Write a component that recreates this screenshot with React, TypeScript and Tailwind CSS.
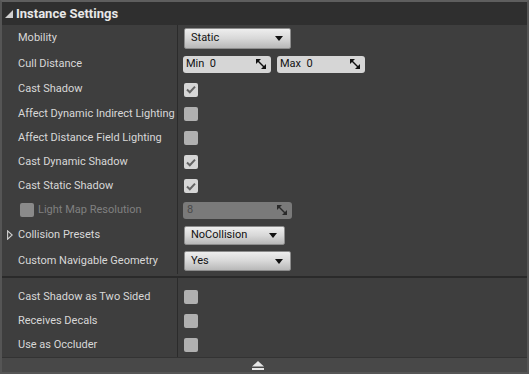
import React from "react";

const font = { fontFamily: "Roboto, 'Noto Sans', sans-serif" };

function Check({ checked, disabled }: { checked?: boolean; disabled?: boolean }) {
  return (
    <div
      className={
        "w-[14px] h-[14px] rounded-[2px] flex items-center justify-center " +
        (disabled ? "bg-[#8a8a8a]" : checked ? "bg-[#d6d6d6]" : "bg-[#b0b0b0]")
      }
    >
      {checked && (
        <svg width="10" height="9" viewBox="0 0 10 9">
          <path d="M1 4.5 L3.8 7.2 L9 1.6" stroke="#646464" strokeWidth="2" fill="none" />
        </svg>
      )}
    </div>
  );
}

function Arrow() {
  return (
    <svg width="8" height="5" viewBox="0 0 8 5">
      <path d="M0 0 H8 L4 5 Z" fill="#111" />
    </svg>
  );
}

function SpinIcon({ color = "#111" }: { color?: string }) {
  return (
    <svg width="10" height="10" viewBox="0 0 10 10">
      <path d="M0 0 H5 L0 5 Z" fill={color} />
      <path d="M10 10 H5 L10 5 Z" fill={color} />
      <path d="M2 2 L8 8" stroke={color} strokeWidth="1.4" />
    </svg>
  );
}

function Dropdown({ text, w, h }: { text: string; w: string; h: string }) {
  return (
    <div
      className={
        w +
        " " +
        h +
        " rounded-[2px] bg-gradient-to-b from-[#eeeeee] via-[#d8d8d8] to-[#b8b8b8] border border-[#8c8c8c] flex items-center justify-between pl-[6px] pr-[7px] text-[11px] text-[#111]"
      }
    >
      <span>{text}</span>
      <Arrow />
    </div>
  );
}

function Row({
  label,
  h,
  children,
  labelEl,
}: {
  label?: string;
  h: string;
  children?: React.ReactNode;
  labelEl?: React.ReactNode;
}) {
  return (
    <div className={"flex " + h}>
      <div className="w-[176px] shrink-0 flex items-center pl-[16px] border-r border-[#2b2b2b] text-[11px] text-[#d8d8d8]">
        {labelEl ?? label}
      </div>
      <div className="flex-1 flex items-center pl-[6px]">{children}</div>
    </div>
  );
}

export default function App() {
  return (
    <div
      className="w-[529px] h-[374px] bg-[#3e3e3e] border-2 border-[#555555] border-t-[#5e5e5e] flex flex-col overflow-hidden"
      style={font}
    >
      <div className="h-[23px] shrink-0 bg-[#2f2f2f] flex items-center pl-[3px]">
        <svg width="8" height="8" viewBox="0 0 8 8" className="mr-[3px] mt-[1px]">
          <path d="M8 0 V8 H0 Z" fill="#d0d0d0" />
        </svg>
        <span className="text-[13px] font-bold text-[#e8e8e8]">Instance Settings</span>
      </div>

      <div className="flex flex-col">
        <Row label="Mobility" h="h-[26px]">
          <Dropdown text="Static" w="w-[107px]" h="h-[21px]" />
        </Row>
        <Row label="Cull Distance" h="h-[26px]">
          <div className="flex gap-[6px] -ml-[1px]">
            <div className="w-[88px] h-[17px] rounded-[3px] bg-[#d6d6d6] flex items-center justify-between pl-[3px] pr-[5px] text-[11px] text-[#111]">
              <span>Min&nbsp;&nbsp;0</span>
              <SpinIcon />
            </div>
            <div className="w-[88px] h-[17px] rounded-[3px] bg-[#d6d6d6] flex items-center justify-between pl-[3px] pr-[5px] text-[11px] text-[#111]">
              <span>Max&nbsp;&nbsp;0</span>
              <SpinIcon />
            </div>
          </div>
        </Row>
        <Row label="Cast Shadow" h="h-[25px]">
          <Check checked />
        </Row>
        <Row label="Affect Dynamic Indirect Lighting" h="h-[24px]">
          <Check />
        </Row>
        <Row label="Affect Distance Field Lighting" h="h-[24px]">
          <Check />
        </Row>
        <Row label="Cast Dynamic Shadow" h="h-[24px]">
          <Check checked />
        </Row>
        <Row label="Cast Static Shadow" h="h-[24px]">
          <Check checked />
        </Row>
        <Row
          h="h-[24px]"
          labelEl={
            <div className="flex items-center ml-[2px] gap-[4px] text-[#808080]">
              <Check disabled />
              <span>Light Map Resolution</span>
            </div>
          }
        >
          <div className="-ml-[1px] w-[109px] h-[17px] rounded-[3px] bg-[#7a7a7a] flex items-center justify-between pl-[4px] pr-[5px] text-[11px] text-[#4a4a4a]">
            <span>8</span>
            <SpinIcon color="#2a2a2a" />
          </div>
        </Row>
        <div className="flex h-[26px]">
          <div className="w-[176px] shrink-0 flex items-center pl-[5px] border-r border-[#2b2b2b] text-[11px] text-[#d8d8d8]">
            <svg width="6" height="10" viewBox="0 0 6 10" className="mr-[5px]">
              <path d="M0.6 0.8 L5.2 5 L0.6 9.2 Z" stroke="#d0d0d0" strokeWidth="1.1" fill="none" />
            </svg>
            <span>Collision Presets</span>
          </div>
          <div className="flex-1 flex items-center pl-[6px]">
            <Dropdown text="NoCollision" w="w-[101px]" h="h-[19px]" />
          </div>
        </div>
        <Row label="Custom Navigable Geometry" h="h-[26px]">
          <Dropdown text="Yes" w="w-[107px]" h="h-[20px]" />
        </Row>
      </div>

      <div className="h-[2px]" />
      <div className="h-[2px] bg-[#2a2a2a]" />
      <div className="flex h-[7px]">
        <div className="w-[176px] shrink-0 border-r border-[#2b2b2b]" />
      </div>

      <div className="flex flex-col">
        <Row label="Cast Shadow as Two Sided" h="h-[24px]">
          <Check />
        </Row>
        <Row label="Receives Decals" h="h-[24px]">
          <Check />
        </Row>
        <Row label="Use as Occluder" h="h-[24px]">
          <Check />
        </Row>
      </div>

      <div className="h-[1px] bg-[#333333]" />
      <div className="flex-1 bg-[#484848] flex items-center justify-center">
        <svg width="12" height="9" viewBox="0 0 12 9" className="ml-[-14px]">
          <path d="M6 0 L12 5.5 H0 Z" fill="#e6e6e6" />
          <rect x="0" y="7" width="12" height="2" fill="#e6e6e6" />
        </svg>
      </div>
    </div>
  );
}
